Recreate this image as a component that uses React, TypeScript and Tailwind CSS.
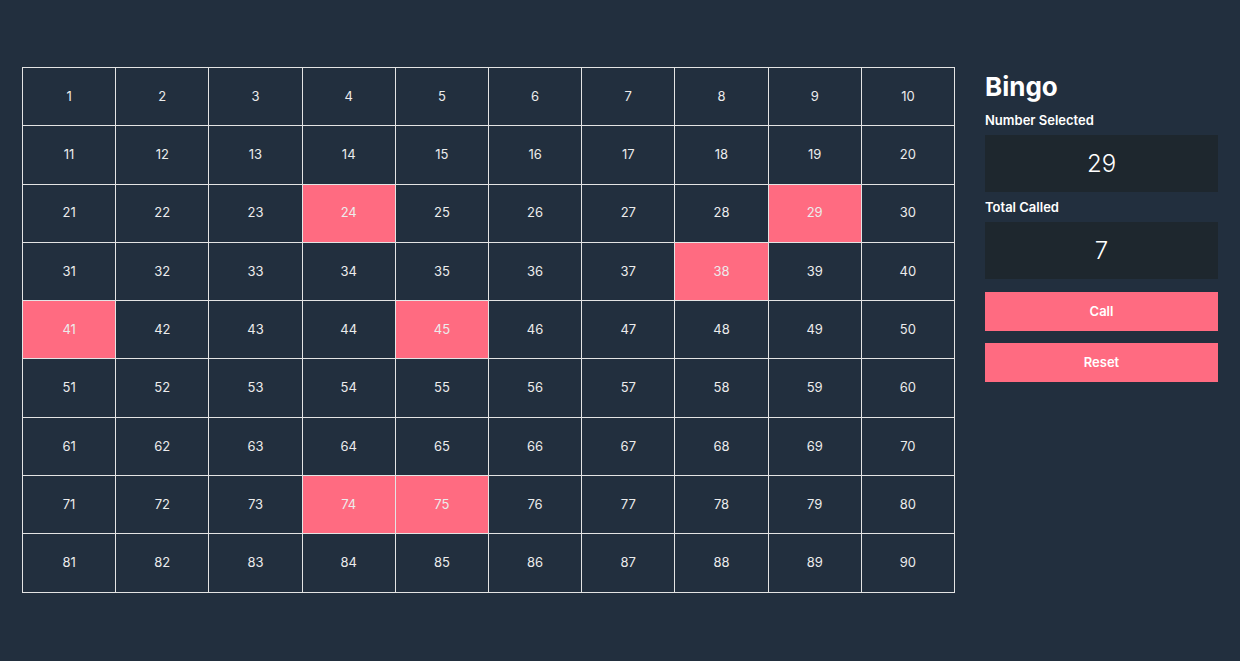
const called = [24, 29, 38, 41, 45, 74, 75];

export default function App() {
  const numbers = Array.from({ length: 90 }, (_, i) => i + 1);

  return (
    <div className="min-h-[661px] bg-[#222f3e] font-['Inter',sans-serif] text-white">
      <div className="flex gap-[30px] px-[22px] pt-[67px]">
        <div className="grid flex-1 grid-cols-10 gap-px border border-[#e4e4e4] bg-[#e4e4e4]">
          {numbers.map((n) => (
            <div
              key={n}
              className={`flex h-[57.3px] items-center justify-center text-[13px] text-[#ececec] ${
                called.includes(n) ? "bg-[#ff6b81]" : "bg-[#222f3e]"
              }`}
            >
              {n}
            </div>
          ))}
        </div>

        <div className="flex w-[233px] flex-col">
          <h1 className="mt-[4px] text-[26px] font-bold leading-[32px]">Bingo</h1>
          <div className="mt-[9px] text-[13px] font-semibold leading-[16px]">Number Selected</div>
          <div className="mt-[7px] flex h-[57px] items-center justify-center bg-[#1e272e] text-[24px] font-light">
            29
          </div>
          <div className="mt-[7px] text-[13px] font-semibold leading-[16px]">Total Called</div>
          <div className="mt-[7px] flex h-[57px] items-center justify-center bg-[#1e272e] text-[24px] font-light">
            7
          </div>
          <button className="mt-[13px] h-[39px] bg-[#ff6b81] text-[13px] font-semibold text-white">Call</button>
          <button className="mt-[12px] h-[39px] bg-[#ff6b81] text-[13px] font-semibold text-white">Reset</button>
        </div>
      </div>
    </div>
  );
}
